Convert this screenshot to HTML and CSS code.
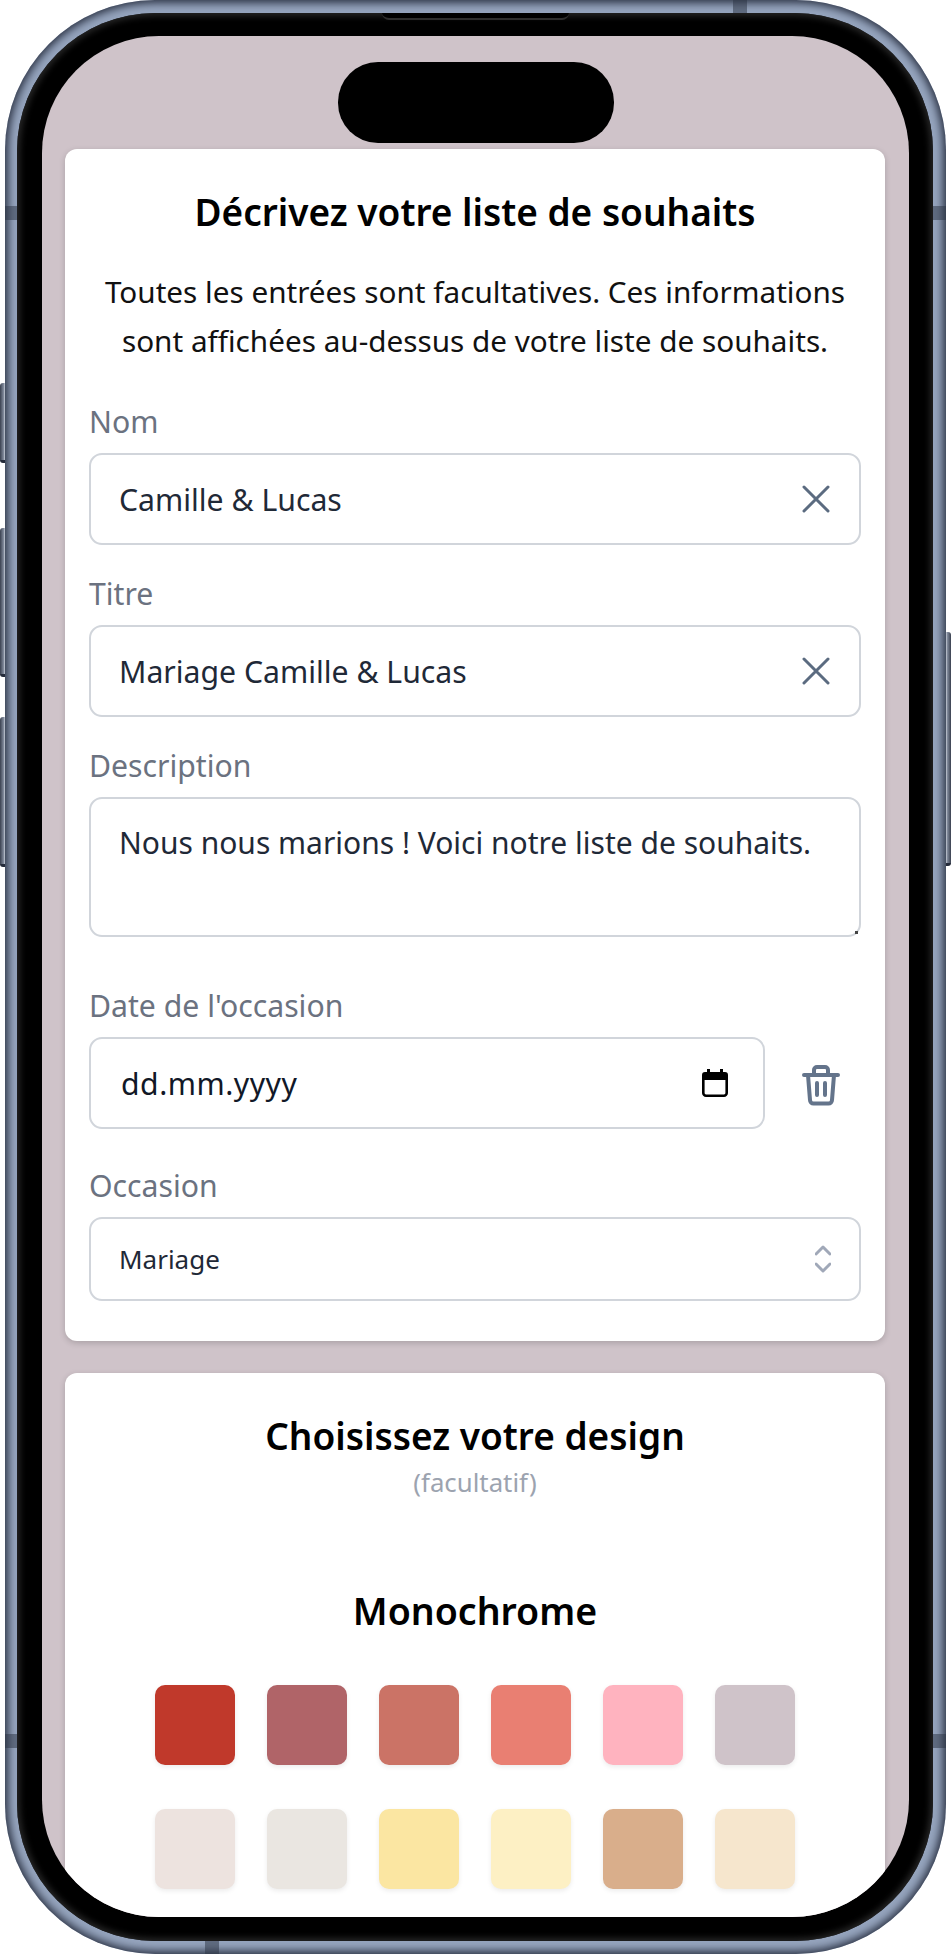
FILE: index.html
```html
<!DOCTYPE html>
<html lang="fr">
<head>
  <meta charset="UTF-8" />
  <title>Liste de souhaits</title>
  <link rel="stylesheet" href="styles.css">
</head>
<body>

  <div class="phone">
    <!-- side buttons and antenna bands sit over the frame -->
    <span class="side-btn btn-mute"></span>
    <span class="side-btn btn-up"></span>
    <span class="side-btn btn-down"></span>
    <span class="side-btn btn-power"></span>
    <span class="band band-left-top"></span>
    <span class="band band-right-top"></span>
    <span class="band band-left-bottom"></span>
    <span class="band band-right-bottom"></span>
    <span class="band band-top"></span>
    <span class="band band-bottom"></span>

    <div class="bezel">
      <span class="speaker"></span>
      <div class="screen">
        <div class="island"></div>

        <section class="card">
          <h2 class="card-title">Décrivez votre liste de souhaits</h2>
          <p class="card-intro">Toutes les entrées sont facultatives. Ces informations sont affichées au-dessus de votre liste de souhaits.</p>

          <label class="field-label">Nom</label>
          <div class="field">
            <span class="field-value">Camille &amp; Lucas</span>
            <svg class="icon-clear" viewBox="0 0 28 28"><path d="M2 2L26 26M26 2L2 26"/></svg>
          </div>

          <label class="field-label">Titre</label>
          <div class="field">
            <span class="field-value">Mariage Camille &amp; Lucas</span>
            <svg class="icon-clear" viewBox="0 0 28 28"><path d="M2 2L26 26M26 2L2 26"/></svg>
          </div>

          <label class="field-label">Description</label>
          <div class="field field-area">
            <span class="field-value area-value">Nous nous marions ! Voici notre liste de souhaits.</span>
            <span class="resizer"></span>
          </div>

          <label class="field-label label-date">Date de l'occasion</label>
          <div class="date-row">
            <div class="field field-date">
              <span class="field-value date-value">dd.mm.yyyy</span>
              <svg class="icon-calendar" viewBox="0 0 26 28">
                <path class="cal-head" d="M5 0h3v3h10V0h3v3h2a3 3 0 0 1 3 3v5H0V6a3 3 0 0 1 3-3h2z"/>
                <path class="cal-body" d="M1.3 9V24a2.7 2.7 0 0 0 2.7 2.7H22a2.7 2.7 0 0 0 2.7-2.7V9"/>
              </svg>
            </div>
            <svg class="icon-trash" viewBox="0 0 38 42">
              <path d="M2 11H36M12 11V6a3 3 0 0 1 3-3h8a3 3 0 0 1 3 3v5M6 11l2 25a3.500 3.500 0 0 0 3.500 3.500h15a3.500 3.500 0 0 0 3.500-3.500l2-25M15 19V31M23 19V31"/>
            </svg>
          </div>

          <label class="field-label label-occasion">Occasion</label>
          <div class="field field-select">
            <span class="select-value">Mariage</span>
            <svg class="icon-updown" viewBox="0 0 16 28"><path d="M1 9L8 2L15 9M1 19L8 26L15 19"/></svg>
          </div>
        </section>

        <section class="card card-design">
          <h2 class="card-title">Choisissez votre design</h2>
          <div class="card-note">(facultatif)</div>
          <h3 class="group-title">Monochrome</h3>
          <div class="swatches">
            <div class="swatch c1"></div>
            <div class="swatch c2"></div>
            <div class="swatch c3"></div>
            <div class="swatch c4"></div>
            <div class="swatch c5"></div>
            <div class="swatch c6"></div>
            <div class="swatch c7"></div>
            <div class="swatch c8"></div>
            <div class="swatch c9"></div>
            <div class="swatch c10"></div>
            <div class="swatch c11"></div>
            <div class="swatch c12"></div>
          </div>
        </section>
      </div>
    </div>
  </div>

</body>
</html>
```

FILE: styles.css
```css
html, body {
  margin: 0;
  height: 1954px;
  overflow: hidden;
  background: white;
}

body {
  font-family: "Noto Sans", Arial, sans-serif;
}

/* phone frame */
.phone {
  position: relative;
  box-sizing: border-box;
  width: 941px;
  height: 1954px;
  margin-left: 5px;
  padding: 13px 13px 13px 12px;
  border-radius: 150px;
  background: #96a5be;
  box-shadow: inset 0 0 9px 3px #2a3142;
}

.bezel {
  position: relative;
  box-sizing: border-box;
  height: 100%;
  padding: 23px 24px 24px 25px;
  border-radius: 138px;
  background: black;
  box-shadow: inset 0 0 6px 3px #262626;
}

.speaker {
  position: absolute;
  top: 0;
  left: 365px;
  width: 187px;
  height: 7px;
  box-sizing: border-box;
  background: black;
  border-bottom: 2px solid #2e2e2e;
  border-radius: 0 0 8px 8px;
}

.screen {
  position: relative;
  box-sizing: border-box;
  height: 100%;
  padding: 113px 24px 0 23px;
  overflow: hidden;
  border-radius: 117px;
  background: #cfc3c9;
}

.island {
  position: absolute;
  top: 26px;
  left: 296px;
  width: 276px;
  height: 81px;
  border-radius: 40px;
  background: black;
}

.side-btn {
  position: absolute;
  width: 5px;
  background: linear-gradient(to right, #39404f, #7f8899 70%, #c9cfd8);
  border-bottom: 3px solid #252b3a;
}

.btn-mute { left: -5px; top: 383px; height: 77px; border-radius: 3px 0 0 3px; }
.btn-up { left: -5px; top: 528px; height: 146px; border-radius: 3px 0 0 3px; }
.btn-down { left: -5px; top: 717px; height: 147px; border-radius: 3px 0 0 3px; }
.btn-power {
  left: 941px;
  top: 632px;
  height: 231px;
  border-radius: 0 3px 3px 0;
  background: linear-gradient(to left, #39404f, #7f8899 70%, #c9cfd8);
}

.band {
  position: absolute;
  background: rgba(42, 49, 66, 0.5);
}

.band-left-top { left: 0; top: 206px; width: 12px; height: 14px; }
.band-right-top { right: 0; top: 206px; width: 13px; height: 14px; }
.band-left-bottom { left: 0; top: 1734px; width: 12px; height: 14px; }
.band-right-bottom { right: 0; top: 1734px; width: 13px; height: 14px; }
.band-top { left: 728px; top: 0; width: 14px; height: 13px; }
.band-bottom { left: 200px; bottom: 0; width: 14px; height: 13px; }

/* cards */
.card {
  box-sizing: border-box;
  padding: 24px 24px 40px;
  border-radius: 12px;
  background: white;
  box-shadow: 0 2px 6px rgba(0, 0, 0, 0.18);
}

.card-design {
  margin-top: 32px;
}

.card-title {
  margin: 0;
  font-size: 37px;
  line-height: 78px;
  font-weight: 600;
  text-align: center;
  color: black;
}

.card-intro {
  margin: 16px 0 37px;
  font-size: 29.7px;
  line-height: 49px;
  text-align: center;
  color: #111;
}

.field-label {
  display: block;
  margin-top: 29px;
  margin-bottom: 11px;
  font-size: 30.2px;
  line-height: 40px;
  color: #6b7280;
}

.card-intro + .field-label {
  margin-top: 0;
}

.label-date {
  margin-top: 49px;
}

.label-occasion {
  margin-top: 37px;
}

.field {
  position: relative;
  box-sizing: border-box;
  display: flex;
  align-items: center;
  justify-content: space-between;
  height: 92px;
  padding: 0 29px 0 28px;
  border: 2px solid #d1d5db;
  border-radius: 13px;
  background: white;
}

.field-value {
  font-size: 30.2px;
  color: #1f2937;
}

.field-area {
  height: 140px;
  align-items: flex-start;
  padding-top: 23px;
}

.area-value {
  font-size: 30px;
}

.resizer {
  position: absolute;
  right: 1px;
  bottom: 1px;
  width: 3px;
  height: 3px;
  background: #444;
}

.date-row {
  display: flex;
  align-items: center;
}

.field-date {
  width: 676px;
  padding-left: 30px;
  padding-right: 35px;
}

.date-value {
  color: #111827;
  letter-spacing: 0.5px;
}

.field-select {
  height: 84px;
  padding-right: 28px;
}

.select-value {
  font-size: 26px;
  color: #1f2937;
}

/* icons */
.icon-clear {
  width: 28px;
  height: 28px;
  fill: none;
  stroke: #5b6b80;
  stroke-width: 3;
  stroke-linecap: round;
}

.icon-calendar {
  width: 26px;
  height: 28px;
}

.cal-head {
  fill: black;
}

.cal-body {
  fill: none;
  stroke: black;
  stroke-width: 2.6;
}

.icon-trash {
  width: 38px;
  height: 42px;
  margin-left: 37px;
  margin-top: 3px;
  fill: none;
  stroke: #64748b;
  stroke-width: 4;
  stroke-linecap: round;
  stroke-linejoin: round;
}

.icon-updown {
  width: 16px;
  height: 28px;
  fill: none;
  stroke: #a0a8b8;
  stroke-width: 3;
  stroke-linecap: round;
  stroke-linejoin: round;
}

/* design picker */
.card-note {
  margin-top: -10px;
  font-size: 25.8px;
  line-height: 34px;
  text-align: center;
  color: #9ca3af;
}

.group-title {
  margin: 87px 0 0;
  font-size: 37.5px;
  line-height: 50px;
  font-weight: 600;
  text-align: center;
  color: black;
}

.swatches {
  display: grid;
  grid-template-columns: repeat(6, 80px);
  justify-content: center;
  column-gap: 32px;
  row-gap: 44px;
  margin-top: 49px;
}

.swatch {
  height: 80px;
  border-radius: 10px;
  box-shadow: 0 2px 5px rgba(0, 0, 0, 0.08);
}

.c1 { background: #c0392b; }
.c2 { background: #b06468; }
.c3 { background: #cb7366; }
.c4 { background: #e97f72; }
.c5 { background: #ffb3bf; }
.c6 { background: #cfc3c9; }
.c7 { background: #ede3df; }
.c8 { background: #eae6e1; }
.c9 { background: #fbe6a2; }
.c10 { background: #fdf0c4; }
.c11 { background: #d9ae8b; }
.c12 { background: #f6e6cd; }
```
